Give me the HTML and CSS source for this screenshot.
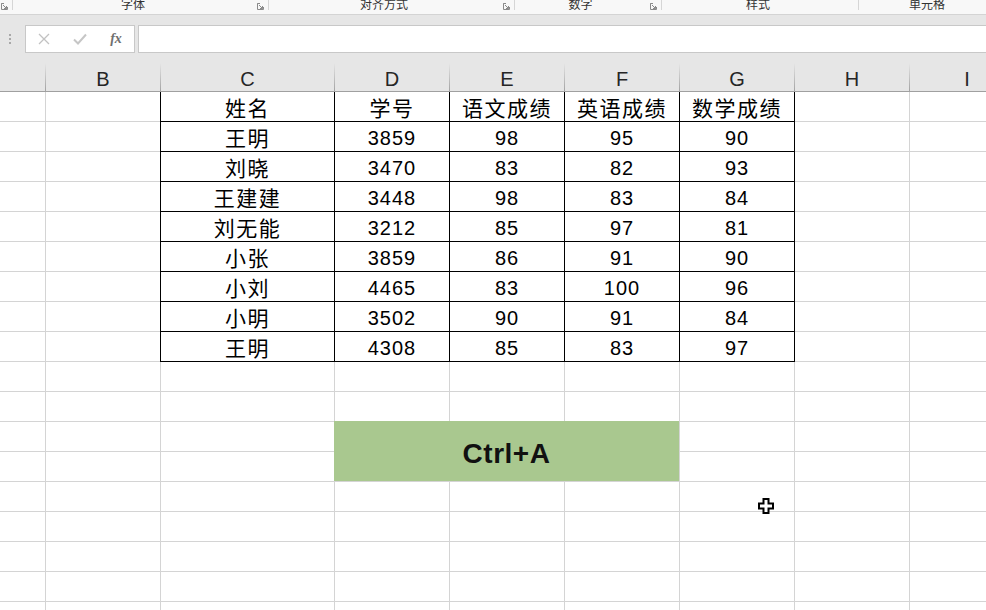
FILE: index.html
```html
<!DOCTYPE html>
<html lang="zh-CN">
<head>
    <meta charset="UTF-8">
    <meta name="viewport" content="width=device-width, initial-scale=1.0">
    <title>成绩表 - Ctrl+A</title>
    <link rel="stylesheet" href="styles.css">
</head>
<body>
    <div class="window">
        <!-- 功能区底部的分组标题 -->
        <div class="ribbon">
            <div class="group g0">
                <svg class="launcher" viewBox="0 0 7 7"><path d="M0.5 3V0.5H3M0.5 0.5V6.5H6.5V4M2 2L5.5 5.5M5.5 3V5.5H3"/></svg>
            </div>
            <div class="group g1">
                <span class="label">字体</span>
                <svg class="launcher" viewBox="0 0 7 7"><path d="M0.5 3V0.5H3M0.5 0.5V6.5H6.5V4M2 2L5.5 5.5M5.5 3V5.5H3"/></svg>
            </div>
            <div class="group g2">
                <span class="label">对齐方式</span>
                <svg class="launcher" viewBox="0 0 7 7"><path d="M0.5 3V0.5H3M0.5 0.5V6.5H6.5V4M2 2L5.5 5.5M5.5 3V5.5H3"/></svg>
            </div>
            <div class="group g3">
                <span class="label">数字</span>
                <svg class="launcher" viewBox="0 0 7 7"><path d="M0.5 3V0.5H3M0.5 0.5V6.5H6.5V4M2 2L5.5 5.5M5.5 3V5.5H3"/></svg>
            </div>
            <div class="group g4">
                <span class="label">样式</span>
            </div>
            <div class="group g5">
                <span class="label">单元格</span>
            </div>
        </div>

        <!-- 编辑栏 -->
        <div class="toolbar">
            <div class="formula-bar">
                <span class="grip"></span>
                <div class="name-tools">
                    <span class="tool">
                        <svg width="12" height="12" viewBox="0 0 12 12"><path d="M1 1L11 11M11 1L1 11" stroke="#c2c2c2" stroke-width="1.3" fill="none"/></svg>
                    </span>
                    <span class="tool">
                        <svg width="14" height="12" viewBox="0 0 14 12"><path d="M1 6.5L5 10.5L13 1.5" stroke="#c6c6c6" stroke-width="2" fill="none"/></svg>
                    </span>
                    <span class="tool fx">fx</span>
                </div>
                <div class="formula-input"></div>
            </div>
        </div>

        <!-- 列标 -->
        <div class="col-header">
            <div class="hd"></div>
            <div class="hd">B</div>
            <div class="hd">C</div>
            <div class="hd">D</div>
            <div class="hd">E</div>
            <div class="hd">F</div>
            <div class="hd">G</div>
            <div class="hd">H</div>
            <div class="hd">I</div>
        </div>

        <!-- 工作表 -->
        <div class="sheet">
            <div class="tbl">
                <div class="c zh">姓名</div><div class="c zh">学号</div><div class="c zh">语文成绩</div><div class="c zh">英语成绩</div><div class="c zh">数学成绩</div>
                <div class="c zh">王明</div><div class="c">3859</div><div class="c">98</div><div class="c">95</div><div class="c">90</div>
                <div class="c zh">刘晓</div><div class="c">3470</div><div class="c">83</div><div class="c">82</div><div class="c">93</div>
                <div class="c zh">王建建</div><div class="c">3448</div><div class="c">98</div><div class="c">83</div><div class="c">84</div>
                <div class="c zh">刘无能</div><div class="c">3212</div><div class="c">85</div><div class="c">97</div><div class="c">81</div>
                <div class="c zh">小张</div><div class="c">3859</div><div class="c">86</div><div class="c">91</div><div class="c">90</div>
                <div class="c zh">小刘</div><div class="c">4465</div><div class="c">83</div><div class="c">100</div><div class="c">96</div>
                <div class="c zh">小明</div><div class="c">3502</div><div class="c">90</div><div class="c">91</div><div class="c">84</div>
                <div class="c zh">王明</div><div class="c">4308</div><div class="c">85</div><div class="c">83</div><div class="c">97</div>
            </div>
            <div class="shortcut">Ctrl+A</div>
        </div>

        <!-- 鼠标指针 -->
        <svg class="cursor" width="17" height="17" viewBox="0 0 17 17">
            <path d="M5.5 1H10.5V5.5H15V10.5H10.5V15H5.5V10.5H1V5.5H5.5Z" fill="#fff" stroke="#000" stroke-width="2"/>
        </svg>
    </div>
</body>
</html>
```

FILE: styles.css
```css
body {
    margin: 0;
    background: #fff;
    font-family: "Liberation Sans", "Noto Sans CJK SC", sans-serif;
}

.window {
    position: relative;
    width: 986px;
    height: 610px;
    overflow: hidden;
}

/* ribbon */
.ribbon {
    display: flex;
    height: 14px;
    background: #f8f8f8;
    border-bottom: 1px solid #d4d4d4;
    overflow: hidden;
}

.group {
    display: flex;
    align-items: flex-start;
    height: 10px;
    border-right: 1px solid #d6d6d6;
    flex-shrink: 0;
}

.g0 { width: 12px; justify-content: flex-end; }
.g1 { width: 255px; }
.g2 { width: 245px; }
.g3 { width: 146px; }
.g4 { width: 196px; }
.g5 { width: 140px; border-right: none; }

.label {
    flex: 1;
    text-align: center;
    font-family: "Noto Sans CJK SC", sans-serif;
    font-size: 12px;
    line-height: 12px;
    margin-top: -2px;
    padding-right: 4px;
    color: #333;
}

.launcher {
    width: 7px;
    height: 7px;
    margin: 3px 4px 0 0;
    fill: none;
    stroke: #8a8a8a;
    stroke-width: 1;
}

/* formula bar */
.toolbar {
    background: #e6e6e6;
    padding: 10px 0;
}

.formula-bar {
    display: flex;
    align-items: center;
    height: 28px;
}

.grip {
    width: 2px;
    height: 10px;
    margin: 0 14px 0 9px;
    background: repeating-linear-gradient(#a8a8a8 0 2px, transparent 2px 4px);
}

.name-tools {
    display: flex;
    align-items: center;
    gap: 16px;
    box-sizing: border-box;
    width: 110px;
    height: 28px;
    padding-left: 8px;
    background: #fff;
    border: 1px solid #c8c8c8;
}

.tool {
    display: flex;
    justify-content: center;
    align-items: center;
    width: 20px;
}

.fx {
    font-family: "Liberation Serif", serif;
    font-style: italic;
    font-weight: bold;
    font-size: 14px;
    color: #707070;
}

.formula-input {
    flex: 1;
    height: 28px;
    box-sizing: border-box;
    margin: 0 -2px 0 3px;
    background: #fff;
    border: 1px solid #c8c8c8;
}

/* column header */
.col-header {
    display: grid;
    grid-template-columns: 45px 114px 173px repeat(6, 114px);
    gap: 1px;
    background: linear-gradient(#e6e6e6, #a2a2a2);
    border-bottom: 1px solid #a0a0a0;
}

.hd {
    height: 28px;
    line-height: 32px;
    overflow: hidden;
    text-align: center;
    background: #e6e6e6;
    font-size: 20px;
    color: #262626;
}

/* worksheet */
.sheet {
    display: grid;
    grid-template-columns: 45px 114px 173px repeat(6, 114px);
    grid-template-rows: repeat(18, 29px);
    gap: 1px;
    background:
        linear-gradient(#d4d4d4, #d4d4d4) 45px 0 / 1px 100% no-repeat,
        linear-gradient(#d4d4d4, #d4d4d4) 160px 0 / 1px 100% no-repeat,
        linear-gradient(#d4d4d4, #d4d4d4) 334px 0 / 1px 100% no-repeat,
        linear-gradient(#d4d4d4, #d4d4d4) 449px 0 / 1px 100% no-repeat,
        linear-gradient(#d4d4d4, #d4d4d4) 564px 0 / 1px 100% no-repeat,
        linear-gradient(#d4d4d4, #d4d4d4) 679px 0 / 1px 100% no-repeat,
        linear-gradient(#d4d4d4, #d4d4d4) 794px 0 / 1px 100% no-repeat,
        linear-gradient(#d4d4d4, #d4d4d4) 909px 0 / 1px 100% no-repeat,
        repeating-linear-gradient(transparent 0 29px, #d4d4d4 29px 30px);
}

.tbl {
    grid-column: 3 / 8;
    grid-row: 1 / 10;
    margin: 0 -1px -1px;
    display: grid;
    grid-template-columns: 173px repeat(4, 114px);
    grid-auto-rows: 29px;
    gap: 1px;
    background: #000;
    border: 1px solid #000;
    border-top: none;
}

.c {
    background: #fff;
    text-align: center;
    padding-top: 4px;
    line-height: 25px;
    font-size: 20px;
    letter-spacing: 1px;
    color: #000;
    overflow: hidden;
}

.c.zh {
    font-size: 21px;
    letter-spacing: 1.5px;
}

.shortcut {
    grid-column: 4 / 7;
    grid-row: 12 / 14;
    margin: -1px 0 0 -1px;
    background: #a9c88f;
    text-align: center;
    padding-top: 6px;
    line-height: 53px;
    font-size: 28px;
    font-weight: bold;
    letter-spacing: 0.5px;
    color: #111;
}

.cursor {
    position: absolute;
    left: 758px;
    top: 498px;
}
```
